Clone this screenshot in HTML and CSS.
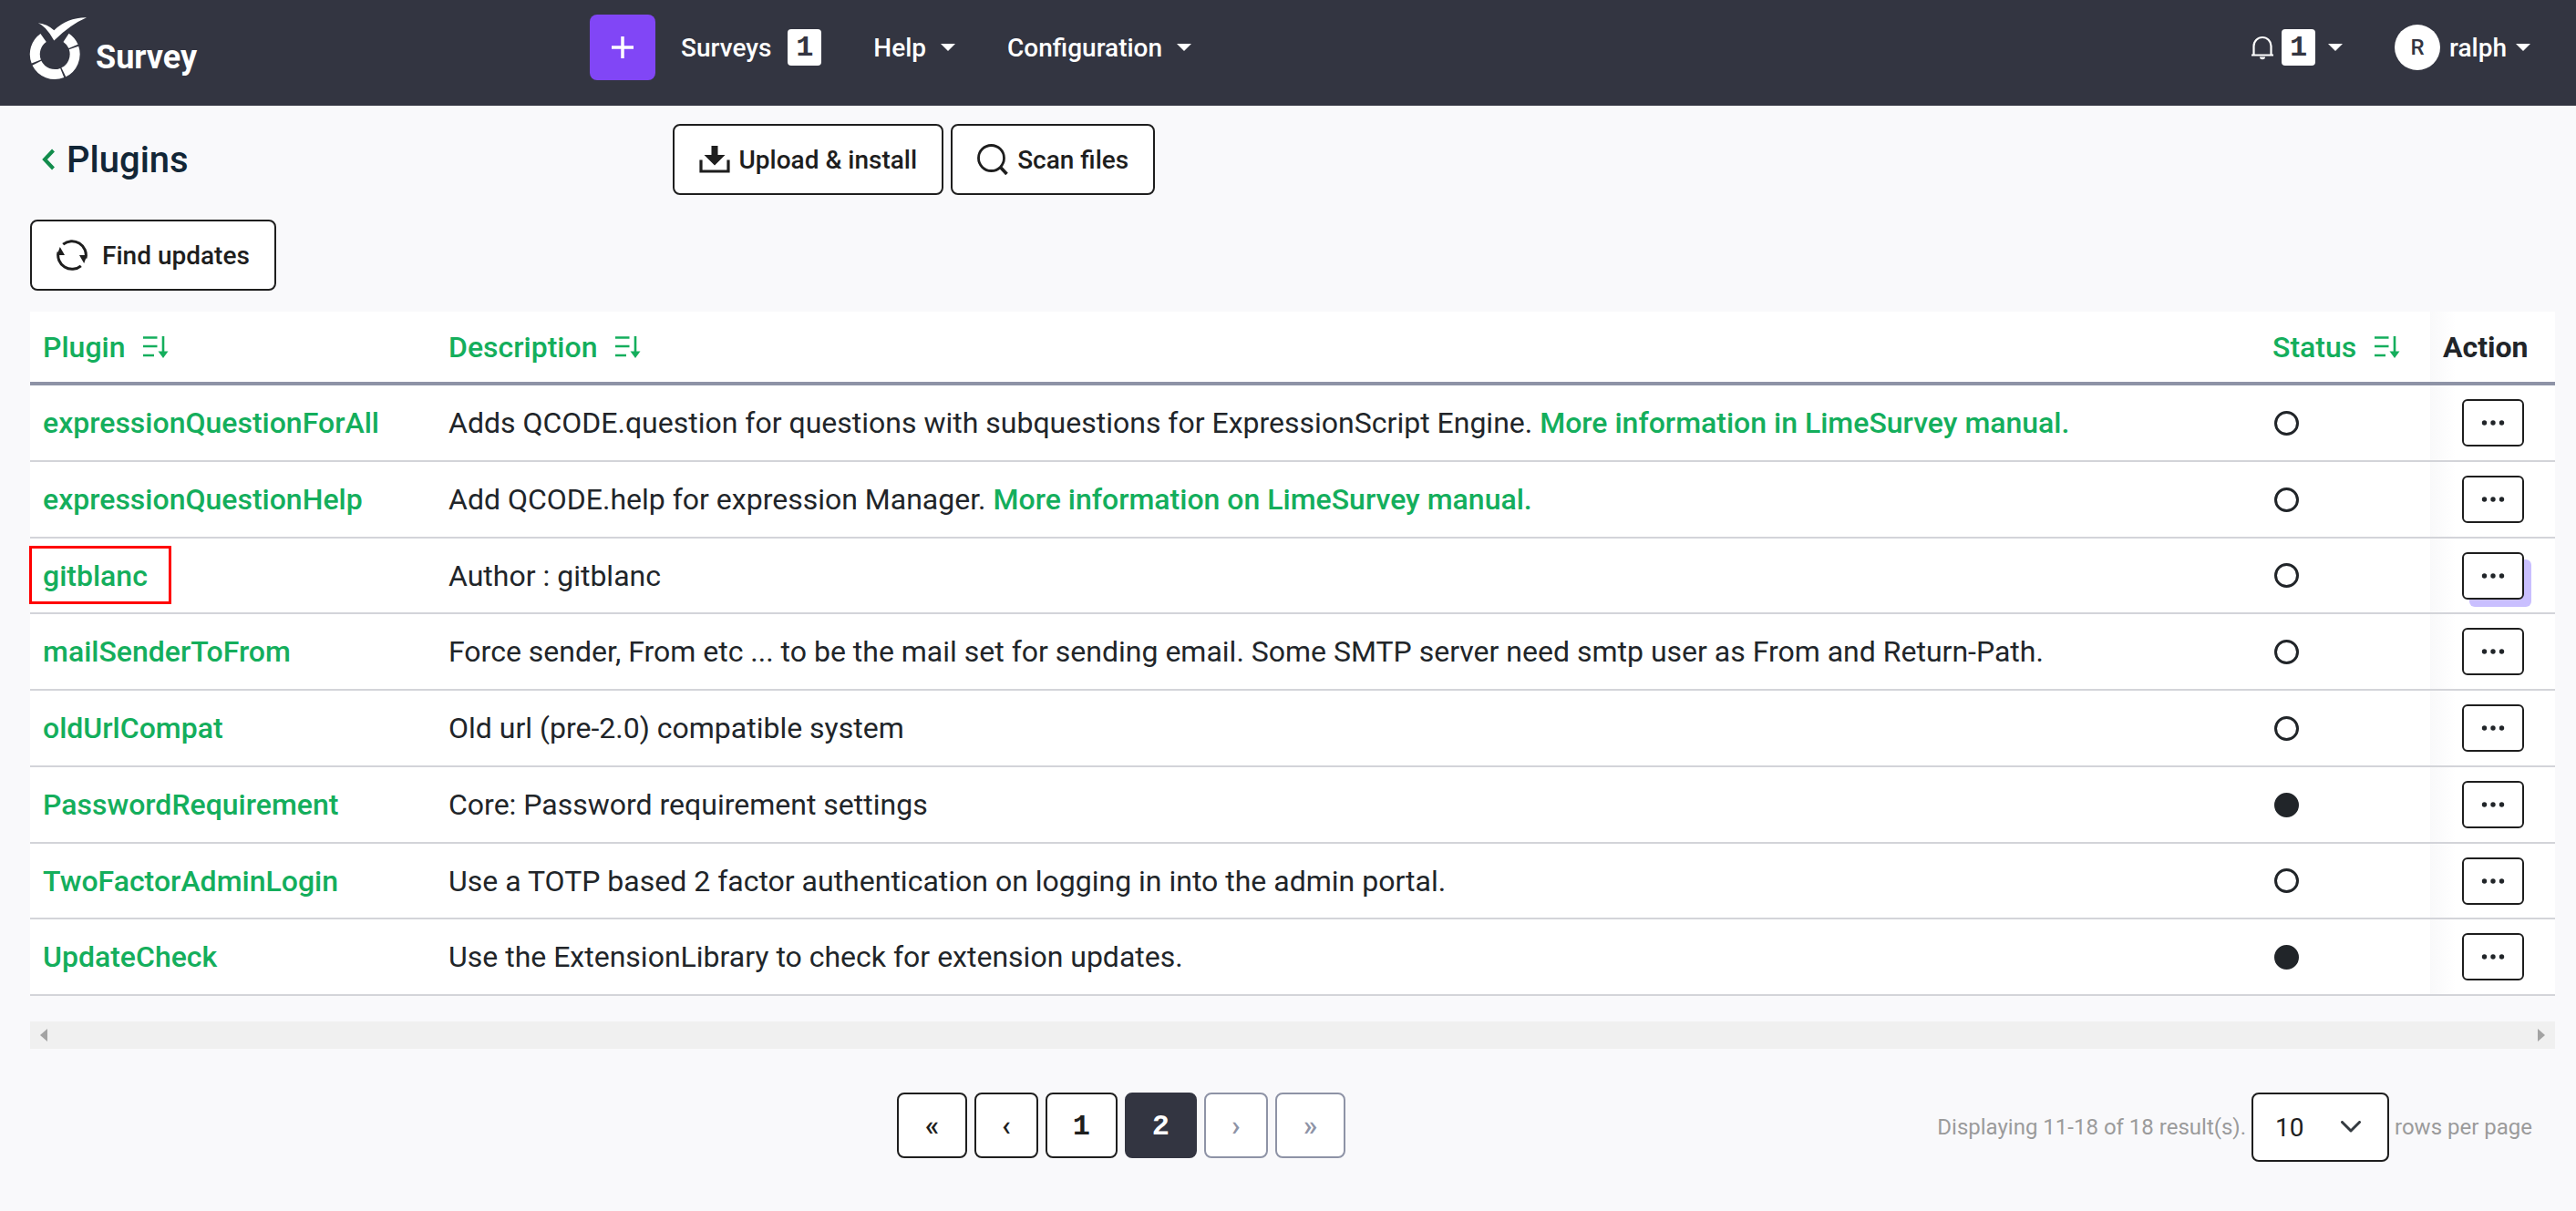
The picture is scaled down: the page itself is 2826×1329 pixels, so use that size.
FILE: index.html
```html
<!DOCTYPE html>
<html lang="en">
<head>
<meta charset="utf-8">
<title>Plugins - LimeSurvey</title>
<link rel="stylesheet" href="styles.css">
</head>
<body>
<svg width="0" height="0" class="sprite" aria-hidden="true">
  <symbol id="i-sort" viewBox="0 0 28 24">
    <path d="M0 1.5h15.500M0 11h15.500M0 21h12M22 0v20" fill="none" stroke="currentColor" stroke-width="2.600"/>
    <path d="M16.500 16.500h11L22 24z" fill="currentColor"/>
  </symbol>
  <symbol id="i-dots" viewBox="0 0 26 6">
    <g fill="currentColor"><circle cx="3.500" cy="3" r="2.700"/><circle cx="13" cy="3" r="2.700"/><circle cx="22.500" cy="3" r="2.700"/></g>
  </symbol>
</svg>

<header class="topbar">
  <a class="brand" href="#">
    <svg width="64" height="70" viewBox="0 0 64 70" aria-hidden="true">
      <path d="M40.500 23.300A22 22 0 0 1 48.500 32.900M49 34.600A22 22 0 0 1 37.800 61.300M36.200 62A22 22 0 0 1 8.400 51.300M7.800 49.500A22 22 0 0 1 15.600 23.500" fill="none" stroke="#fff" stroke-width="11"/>
      <path d="M9.700 7.300Q20 8.500 27.300 15.300Q42 1 63 1.300Q45 9 27.300 26.500Q18 10 9.700 7.300Z" fill="#fff"/>
    </svg>
    <span>Survey</span>
  </a>
  <nav class="mainnav">
    <button class="create" type="button" aria-label="Create survey">
      <svg width="26" height="26" viewBox="0 0 26 26"><path d="M13 1v24M1 13h24" stroke="#fff" stroke-width="3.500"/></svg>
    </button>
    <a href="#" class="surveys">Surveys <span class="badge">1</span></a>
    <a href="#">Help <span class="caret"></span></a>
    <a href="#">Configuration <span class="caret"></span></a>
  </nav>
  <nav class="usernav">
    <a href="#" class="bell" aria-label="Notifications">
      <svg width="24" height="28" viewBox="0 0 24 28"><path d="M2.500 22.500V12.500a9.500 9.500 0 0 1 19 0V22.500M0 22.500h24" fill="none" stroke="#fff" stroke-width="2.200"/><path d="M9 24.500h6a3 2.800 0 0 1-6 0z" fill="#fff"/></svg>
      <span class="badge">1</span>
      <span class="caret"></span>
    </a>
    <a href="#" class="user"><span class="avatar">R</span>ralph<span class="caret"></span></a>
  </nav>
</header>

<main class="page">
  <div class="titlebar">
    <h1><a href="#" aria-label="Back"><svg width="16" height="24" viewBox="0 0 16 24"><path d="M13.500 2L4 12l9.500 10" fill="none" stroke="#128c4c" stroke-width="4"/></svg></a>Plugins</h1>
    <div class="actions">
      <button class="btn" type="button">
        <svg width="34" height="34" viewBox="0 0 34 34"><path d="M2 17.500V30h30V17.500" fill="none" stroke="currentColor" stroke-width="3.200"/><path d="M13.500 2h7v10h8L17 23.500 5.500 12h8z" fill="currentColor"/></svg>
        Upload &amp; install
      </button>
      <button class="btn" type="button">
        <svg width="34" height="34" viewBox="0 0 34 34"><circle cx="15.500" cy="15.500" r="14" fill="none" stroke="currentColor" stroke-width="2.800"/><path d="M25 25l7.500 8" stroke="currentColor" stroke-width="3.600"/></svg>
        Scan files
      </button>
    </div>
  </div>

  <button class="btn update" type="button">
    <svg width="34" height="34" viewBox="0 0 34 34"><path d="M7.200 5.200A15.300 15.300 0 0 1 31.900 20.500M26.800 28.800A15.300 15.300 0 0 1 2.100 13.500" fill="none" stroke="currentColor" stroke-width="3"/><path d="M3.800 8L9 17H.5zM30.200 26L25 17h8.500z" fill="currentColor"/></svg>
    Find updates
  </button>

  <table class="plugins">
    <colgroup><col class="c-name"><col><col class="c-status"><col class="c-action"></colgroup>
    <thead>
      <tr>
        <th scope="col"><a href="#">Plugin<svg width="28" height="24"><use href="#i-sort"/></svg></a></th>
        <th scope="col"><a href="#">Description<svg width="28" height="24"><use href="#i-sort"/></svg></a></th>
        <th scope="col"><a href="#">Status<svg width="28" height="24"><use href="#i-sort"/></svg></a></th>
        <th scope="col" class="act">Action</th>
      </tr>
    </thead>
    <tbody>
      <tr>
        <td><a href="#">expressionQuestionForAll</a></td>
        <td>Adds QCODE.question for questions with subquestions for ExpressionScript Engine. <a href="#">More information in LimeSurvey manual.</a></td>
        <td><span class="dot"></span></td>
        <td class="act"><button type="button" aria-label="Actions"><svg width="26" height="6"><use href="#i-dots"/></svg></button></td>
      </tr>
      <tr>
        <td><a href="#">expressionQuestionHelp</a></td>
        <td>Add QCODE.help for expression Manager. <a href="#">More information on LimeSurvey manual.</a></td>
        <td><span class="dot"></span></td>
        <td class="act"><button type="button" aria-label="Actions"><svg width="26" height="6"><use href="#i-dots"/></svg></button></td>
      </tr>
      <tr>
        <td class="marked"><a href="#">gitblanc</a></td>
        <td>Author : gitblanc</td>
        <td><span class="dot"></span></td>
        <td class="act"><button type="button" class="hovered" aria-label="Actions"><svg width="26" height="6"><use href="#i-dots"/></svg></button></td>
      </tr>
      <tr>
        <td><a href="#">mailSenderToFrom</a></td>
        <td>Force sender, From etc ... to be the mail set for sending email. Some SMTP server need smtp user as From and Return-Path.</td>
        <td><span class="dot"></span></td>
        <td class="act"><button type="button" aria-label="Actions"><svg width="26" height="6"><use href="#i-dots"/></svg></button></td>
      </tr>
      <tr>
        <td><a href="#">oldUrlCompat</a></td>
        <td>Old url (pre-2.0) compatible system</td>
        <td><span class="dot"></span></td>
        <td class="act"><button type="button" aria-label="Actions"><svg width="26" height="6"><use href="#i-dots"/></svg></button></td>
      </tr>
      <tr>
        <td><a href="#">PasswordRequirement</a></td>
        <td>Core: Password requirement settings</td>
        <td><span class="dot on"></span></td>
        <td class="act"><button type="button" aria-label="Actions"><svg width="26" height="6"><use href="#i-dots"/></svg></button></td>
      </tr>
      <tr>
        <td><a href="#">TwoFactorAdminLogin</a></td>
        <td>Use a TOTP based 2 factor authentication on logging in into the admin portal.</td>
        <td><span class="dot"></span></td>
        <td class="act"><button type="button" aria-label="Actions"><svg width="26" height="6"><use href="#i-dots"/></svg></button></td>
      </tr>
      <tr>
        <td><a href="#">UpdateCheck</a></td>
        <td>Use the ExtensionLibrary to check for extension updates.</td>
        <td><span class="dot on"></span></td>
        <td class="act"><button type="button" aria-label="Actions"><svg width="26" height="6"><use href="#i-dots"/></svg></button></td>
      </tr>
    </tbody>
  </table>

  <div class="scrollbar" aria-hidden="true">
    <svg width="8" height="14" viewBox="0 0 8 14"><path d="M8 0v14L0 7z" fill="#a3a3a3"/></svg>
    <svg width="8" height="14" viewBox="0 0 8 14"><path d="M0 0v14l8-7z" fill="#a3a3a3"/></svg>
  </div>

  <div class="footer">
    <nav class="pager" aria-label="Pages">
      <a href="#" class="last">«</a>
      <a href="#" class="step">‹</a>
      <a href="#">1</a>
      <a href="#" class="current" aria-current="page">2</a>
      <a href="#" class="step off">›</a>
      <a href="#" class="last off">»</a>
    </nav>
    <div class="summary">
      <span>Displaying 11-18 of 18 result(s).</span>
      <span class="select">
        <select id="rows"><option>10</option><option>20</option><option>50</option></select>
        <svg width="22" height="14" viewBox="0 0 22 14"><path d="M1.500 1.500L11 11l9.500-9.500" fill="none" stroke="#343a40" stroke-width="3" stroke-linecap="round" stroke-linejoin="round"/></svg>
      </span>
      <label for="rows">rows per page</label>
    </div>
  </div>
</main>
</body>
</html>
```
FILE: styles.css
```css
*, *::after { box-sizing: border-box; }

body {
  margin: 0;
  background: #f9f9fb;
  color: #212529;
  font-family: Roboto, "Noto Sans", sans-serif;
  font-size: 32px;
}

a { color: #14ae5c; font-weight: 500; text-decoration: none; }
button, select { font: inherit; color: inherit; }
svg { flex: none; }
.sprite { position: absolute; }

/* Top bar */
.topbar {
  display: flex;
  padding: 16px 50px 28px 32px;
  background: #333541;
  font-size: 28px;
}
.topbar a { color: #fff; }
.brand {
  flex: 0 0 615px;
  display: flex;
  align-items: flex-end;
  gap: 9px;
  height: 72px;
  font-size: 36px;
  line-height: 50px;
}
.brand span { font-weight: 700; }
.mainnav, .usernav, .mainnav a, .usernav a { display: flex; align-items: center; }
.mainnav { gap: 57px; }
.mainnav a { gap: 16px; }
.mainnav .surveys { gap: 18px; margin-left: -29px; }
.usernav { margin-left: auto; gap: 57px; }
.create {
  display: grid;
  place-items: center;
  width: 72px;
  height: 72px;
  border: 0;
  border-radius: 8px;
  background: #8146f6;
}
.badge {
  width: 37px;
  height: 40px;
  border-radius: 4px;
  background: #fff;
  color: #333541;
  font: 700 32px/42px "Liberation Mono", monospace;
  text-align: center;
}
.caret {
  border: 8px solid transparent;
  border-top-color: #fff;
  border-bottom: 0;
}
.bell svg { margin-right: 9px; }
.bell .caret { margin-left: 14px; }
.avatar {
  width: 50px;
  margin-right: 10px;
  border-radius: 50%;
  background: #fff;
  color: #333541;
  font-size: 24px;
  line-height: 50px;
  text-align: center;
}
.user .caret { margin-left: 10px; }

/* Title and toolbar */
.page { padding: 20px 23px 48px 33px; }
.titlebar { display: grid; grid-template-columns: 25% 1fr; align-items: center; }
h1 {
  display: flex;
  align-items: center;
  gap: 12px;
  margin: 0;
  padding-left: 12px;
  color: #122636;
  font-size: 40px;
  font-weight: 500;
}
h1 a { display: flex; }
.actions { display: flex; gap: 8px; padding-left: 12px; }
.btn {
  display: flex;
  align-items: center;
  gap: 10px;
  height: 78px;
  padding: 0 27px;
  border: 2px solid #1e1e1e;
  border-radius: 8px;
  background: #fff;
  color: #1e1e1e;
  font-size: 28px;
  font-weight: 500;
}
.update { gap: 16px; margin-top: 27px; }

/* Plugin table */
.plugins {
  width: 100%;
  margin-top: 23px;
  border-collapse: separate;
  border-spacing: 0;
  table-layout: fixed;
  background: #fff;
}
.c-name { width: 445px; }
.c-status { width: 187px; }
.c-action { width: 137px; }
th, td { padding: 0 14px; text-align: left; line-height: 40px; }
th { height: 81px; border-bottom: 4px solid #8e93a6; font-weight: 700; }
th a { display: flex; align-items: center; gap: 20px; }
td { height: 84px; border-bottom: 2px solid #d3d4d9; }
tbody tr:nth-child(4n+3) td { height: 83px; }
.act { background: linear-gradient(90deg, #f9f9fa, #fff 28px); }
td.act { padding-left: 35px; }
.act button {
  display: grid;
  place-items: center;
  width: 68px;
  height: 52px;
  border: 2px solid #1e1e1e;
  border-radius: 6px;
  background: #fff;
}
.act .hovered { box-shadow: 8px 8px 0 #c9bfff; }
.dot {
  display: block;
  width: 27px;
  height: 27px;
  margin-left: 2px;
  border: 3px solid #212529;
  border-radius: 50%;
}
.dot.on { background: #212529; }
.marked { position: relative; }
.marked::after {
  content: "";
  position: absolute;
  left: -1px;
  top: 8px;
  width: 156px;
  height: 64px;
  border: 3px solid #f00;
}

/* Horizontal scroll track */
.scrollbar {
  display: flex;
  justify-content: space-between;
  align-items: center;
  height: 30px;
  margin-top: 28px;
  padding: 0 11px;
  background: #f0f0f0;
}

/* Pager and page size */
.footer {
  display: flex;
  justify-content: space-between;
  margin-top: 48px;
  padding: 0 25px 0 34.330%;
}
.pager { display: flex; gap: 8px; }
.pager a {
  width: 79px;
  height: 72px;
  border: 2px solid #1e1e1e;
  border-radius: 8px;
  background: #fff;
  color: #1e1e1e;
  font: 700 32px/72px "Liberation Mono", monospace;
  text-align: center;
}
.pager .last, .pager .step { font: 500 32px/68px Roboto, sans-serif; }
.pager .last { width: 77px; }
.pager .step { width: 70px; }
.pager .current { border-color: #333541; background: #333541; color: #fff; }
.pager .off { border-color: #8e93a6; color: #8e93a6; }
.summary {
  display: flex;
  align-items: center;
  gap: 6px;
  color: #9b9b9b;
  font-size: 24px;
}
.select { display: grid; align-items: center; }
.select select, .select svg { grid-area: 1 / 1; }
.select select {
  appearance: none;
  width: 151px;
  height: 76px;
  padding: 0 24px;
  border: 2px solid #1e1e1e;
  border-radius: 8px;
  background: #fff;
  color: #1e1e1e;
  font-size: 28px;
}
.select svg { justify-self: end; margin-right: 31px; pointer-events: none; }
```
